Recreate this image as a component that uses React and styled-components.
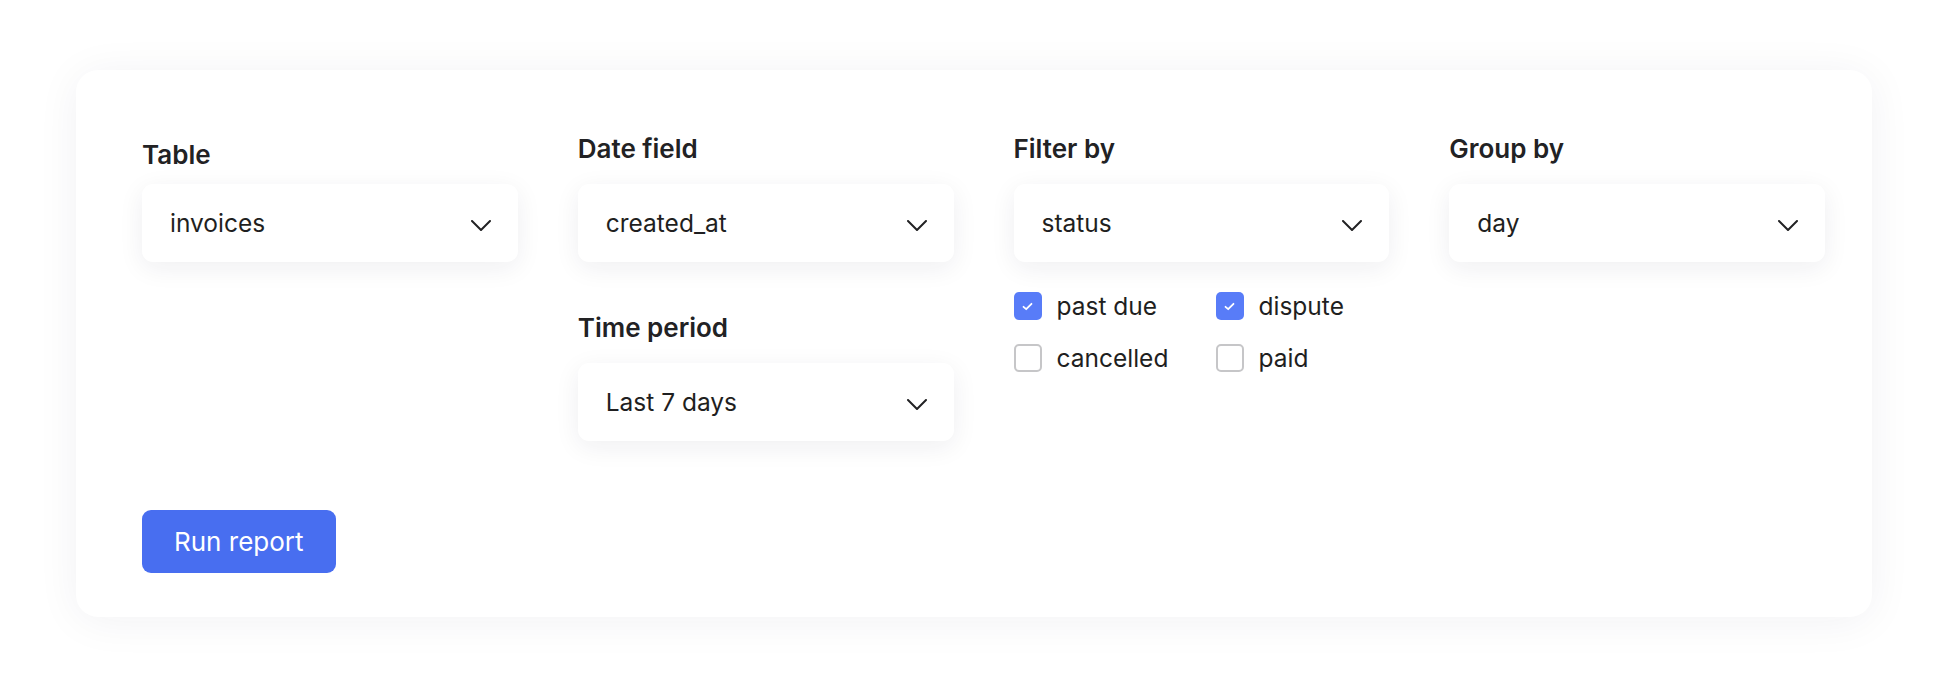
import React from "react";
import styled, { createGlobalStyle } from "styled-components";

const GlobalStyle = createGlobalStyle`
  * { box-sizing: border-box; }
  html, body { margin: 0; padding: 0; background: #ffffff; }
  body { font-family: Inter, "Noto Sans", sans-serif; color: #1f1f21; }
`;

const Page = styled.div`
  padding: 70px 76px;
`;

const Card = styled.section`
  background: #ffffff;
  border-radius: 22px;
  box-shadow: 0 4px 44px rgba(30, 30, 60, 0.06);
  padding: 64px 66px 44px;
`;

const Grid = styled.div`
  display: grid;
  grid-template-columns: repeat(4, 375.75px);
  column-gap: 60px;
  align-items: start;
`;

const Column = styled.div`
  display: flex;
  flex-direction: column;
  gap: 51px;
`;

const Field = styled.div`
  display: flex;
  flex-direction: column;
`;

const Label = styled.label`
  font-size: 26px;
  line-height: 30px;
  font-weight: 600;
  color: #222224;
  margin-top: ${(p) => (p.$shift ? "6px" : "0")};
  margin-bottom: ${(p) => (p.$shift ? "14px" : "20px")};
`;

const SelectBox = styled.div`
  height: 78px;
  border-radius: 11px;
  background: #ffffff;
  box-shadow: 0 6px 26px rgba(30, 30, 50, 0.07);
  display: flex;
  align-items: center;
  justify-content: space-between;
  padding: 0 27px 0 28px;
  font-size: 24.5px;
  color: #1f1f21;
`;

const Chevron = styled.svg`
  width: 20px;
  height: 11px;
  margin-top: 4px;
  flex: none;
`;

const Checks = styled.div`
  display: grid;
  grid-template-columns: 202px 1fr;
  row-gap: 24px;
  margin-top: 30px;
`;

const CheckItem = styled.div`
  display: flex;
  align-items: center;
  gap: 15px;
  height: 28px;
  font-size: 24.5px;
  color: #1f1f21;
`;

const Box = styled.span`
  width: 28px;
  height: 28px;
  border-radius: 5px;
  flex: none;
  display: flex;
  align-items: center;
  justify-content: center;
  background: ${(p) => (p.$checked ? "#587cf8" : "#ffffff")};
  border: ${(p) => (p.$checked ? "none" : "2px solid #c6c6c8")};
`;

const Footer = styled.div`
  margin-top: 69px;
`;

const Button = styled.button`
  height: 63px;
  padding: 0 32px;
  border: none;
  border-radius: 9px;
  background: #486ef0;
  color: #ffffff;
  font-family: Inter, "Noto Sans", sans-serif;
  font-size: 26px;
  font-weight: 400;
`;

const ChevronIcon = () => (
  <Chevron viewBox="0 0 20 11" fill="none">
    <polyline
      points="1,1 10,10 19,1"
      stroke="#222224"
      strokeWidth="2"
      strokeLinecap="round"
      strokeLinejoin="round"
    />
  </Chevron>
);

const Select = ({ value }) => (
  <SelectBox>
    <span>{value}</span>
    <ChevronIcon />
  </SelectBox>
);

const Check = ({ label, checked }) => (
  <CheckItem>
    <Box $checked={checked}>
      {checked && (
        <svg width="11" height="9" viewBox="0 0 11 9" fill="none">
          <polyline
            points="1.5,4.8 4.2,7.2 9.5,1.8"
            stroke="#ffffff"
            strokeWidth="1.8"
            strokeLinecap="round"
            strokeLinejoin="round"
          />
        </svg>
      )}
    </Box>
    <span>{label}</span>
  </CheckItem>
);

export default function App() {
  return (
    <>
      <GlobalStyle />
      <Page>
        <Card>
          <Grid>
            <Column>
              <Field>
                <Label $shift>Table</Label>
                <Select value="invoices" />
              </Field>
            </Column>
            <Column>
              <Field>
                <Label>Date field</Label>
                <Select value="created_at" />
              </Field>
              <Field>
                <Label>Time period</Label>
                <Select value="Last 7 days" />
              </Field>
            </Column>
            <Column>
              <Field>
                <Label>Filter by</Label>
                <Select value="status" />
                <Checks>
                  <Check label="past due" checked />
                  <Check label="dispute" checked />
                  <Check label="cancelled" />
                  <Check label="paid" />
                </Checks>
              </Field>
            </Column>
            <Column>
              <Field>
                <Label>Group by</Label>
                <Select value="day" />
              </Field>
            </Column>
          </Grid>
          <Footer>
            <Button>Run report</Button>
          </Footer>
        </Card>
      </Page>
    </>
  );
}
